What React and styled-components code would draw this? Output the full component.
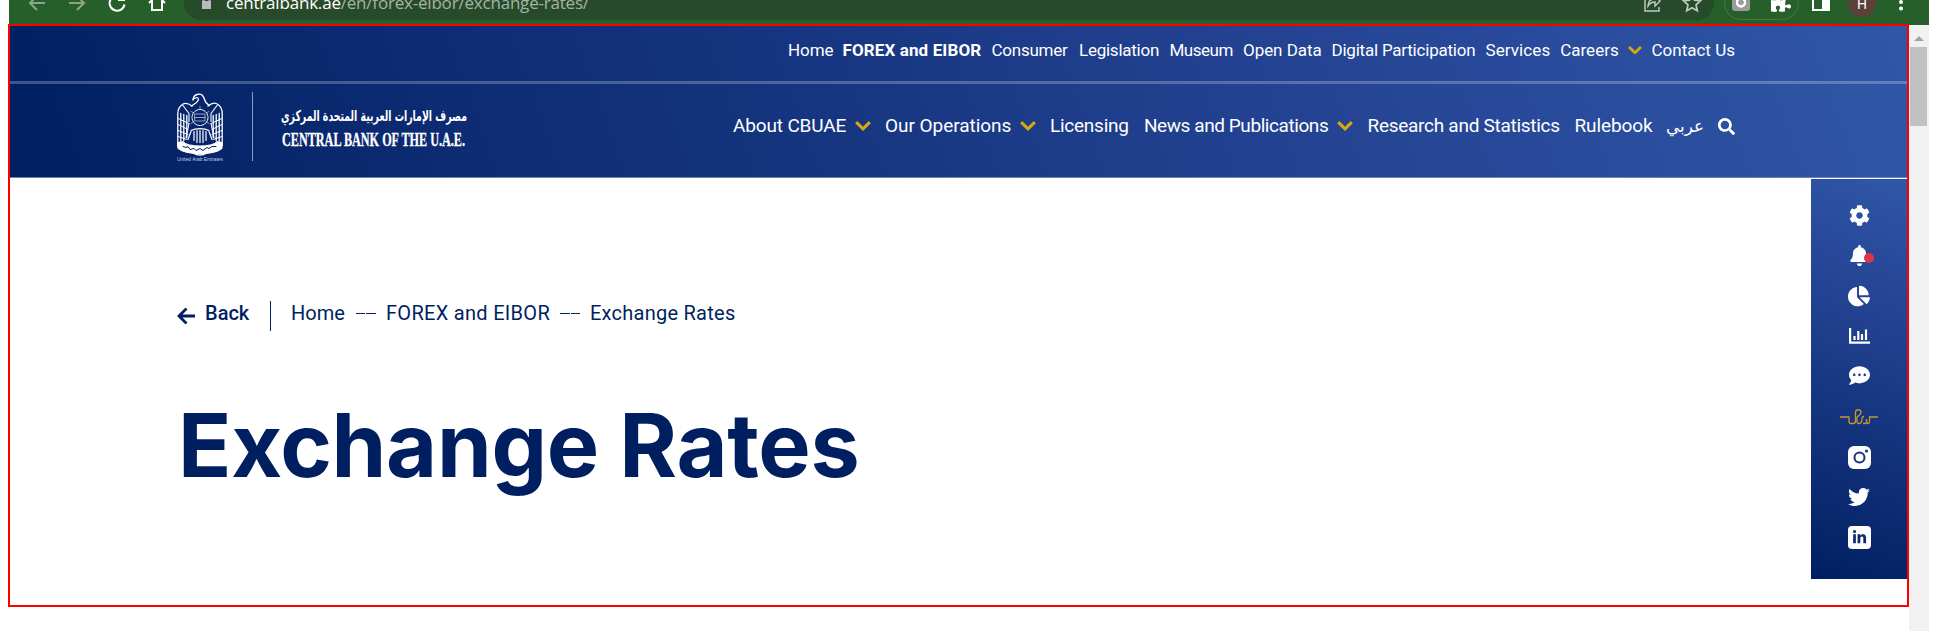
import React from 'react';
import styled, { createGlobalStyle } from 'styled-components';
import { FaCog, FaBell, FaChartPie, FaCommentDots, FaTwitter, FaLinkedinIn, FaSearch, FaPuzzlePiece } from 'react-icons/fa';

const navy = '#001f60';
const gold = '#d9a810';

const GlobalStyle = createGlobalStyle`
  * { box-sizing: border-box; }
  body { margin: 0; background: #fff; font-family: Roboto, "DejaVu Sans", sans-serif; }
`;

const Page = styled.div`
  width: 1938px;
  height: 631px;
  overflow: hidden;
  padding: 0 9px 0 8px;
`;

const BrowserBar = styled.div`
  height: 24px;
  margin-left: 1px;
  background: #275f2b;
  overflow: hidden;
`;

const BrowserRow = styled.div`
  display: flex;
  align-items: center;
  height: 46px;
  margin-top: -20px;
  padding: 0 17px 0 18px;
`;

const BrowserIcon = styled.svg`
  flex: none;
  width: ${(p) => p.$width || 20}px;
  height: 20px;
  margin-right: ${(p) => p.$gap || 0}px;
  opacity: ${(p) => p.$opacity || 1};
  fill: none;
  stroke: #fff;
  stroke-width: 2;
`;

const AddressBar = styled.div`
  display: flex;
  flex: none;
  align-items: center;
  width: 1530px;
  height: 34px;
  padding: 0 12px 0 17px;
  border-radius: 17px;
  background: #274a2a;
`;

const Url = styled.span`
  flex: 1;
  font: 17px/34px "Open Sans", sans-serif;
  letter-spacing: -0.2px;
  color: #a3b5a4;
  b { font-weight: 400; color: #fff; }
`;

const Extensions = styled.div`
  display: flex;
  flex: none;
  align-items: center;
  justify-content: space-between;
  width: 75px;
  height: 33px;
  margin: 0 12px 0 10px;
  padding: 0 7px;
  border: 1px solid #3d7a42;
  border-radius: 17px;
  color: #fff;
`;

const CameraBadge = styled.span`
  width: 18px;
  height: 18px;
  margin-top: -2px;
  border-radius: 3px;
  background: radial-gradient(circle at 50% 52%, #9c9c9c 2.5px, #fff 3px, #fff 5px, #9c9c9c 5.5px);
`;

const Avatar = styled.span`
  flex: none;
  width: 28px;
  height: 28px;
  margin: 0 16px 0 17px;
  border-radius: 50%;
  background: #5d4037;
  color: #fff;
  font-size: 14px;
  line-height: 30px;
  text-align: center;
`;

const Viewport = styled.div`
  display: flex;
  height: 607px;
`;

const Site = styled.div`
  width: 1901px;
  height: 583px;
  border: 2px solid #f00;
`;

const Header = styled.header`
  height: 152px;
  border-bottom: 1px solid #6b83b9;
  background: linear-gradient(70deg, #001f62 0%, #254494 70%, #3057a7 100%);
`;

const TopBar = styled.div`
  display: flex;
  justify-content: flex-end;
  height: 58px;
  padding: 12px 172px 0 0;
  border-bottom: 3px solid rgba(255, 255, 255, 0.24);
`;

const MainBar = styled.div`
  display: flex;
  justify-content: space-between;
  padding: 8px 172px 0 167px;
`;

const Nav = styled.nav`
  display: flex;
  color: #fff;
  font-size: ${(p) => p.$size}px;
  line-height: 24px;
  margin-top: ${(p) => p.$top || 0}px;
`;

const NavItem = styled.a`
  display: flex;
  align-items: center;
  flex: none;
  width: ${(p) => p.$width}px;
  height: 24px;
  white-space: nowrap;
  font-weight: ${(p) => (p.$active ? 700 : 400)};
  letter-spacing: ${(p) => p.$spacing || 0}px;
  svg { flex: none; }
`;

const ChevronSvg = styled.svg`
  margin: 0 ${(p) => p.$after}px 0 auto;
`;

const Chevron = ({ size, after }) => (
  <ChevronSvg $after={after} width={size} height={size * 0.62} viewBox="0 0 15 9.3">
    <path d="M1.1 1.1 7.5 7.3 13.900 1.1" fill="none" stroke={gold} strokeWidth="2.900" />
  </ChevronSvg>
);

const Content = styled.main`
  display: flex;
  justify-content: space-between;
  align-items: flex-start;
  padding-top: 1px;
`;

const Article = styled.div`
  padding: 122px 0 0 167px;
  color: ${navy};
`;

const Breadcrumb = styled.div`
  display: flex;
  align-items: center;
  height: 30px;
  font-size: 20px;
  white-space: nowrap;
`;

const BackLink = styled.a`
  display: flex;
  align-items: center;
  width: 94px;
  height: 30px;
  margin-right: 20px;
  border-right: 1px solid ${navy};
  font-weight: 500;
  padding-bottom: 6px;
  svg { margin: 5px 9px 0 0; }
`;

const Crumb = styled.a`
  width: ${(p) => p.$width}px;
  letter-spacing: ${(p) => p.$spacing || 0}px;
  padding-bottom: 6px;
`;

const Dash = styled.span`
  width: 20px;
  height: 1px;
  margin: 0 10px 6px 0;
  background: linear-gradient(90deg, ${navy} 9.5px, transparent 9.5px, transparent 10.5px, ${navy} 10.5px);
`;

const Title = styled.h1`
  margin: 62px 0 0 1px;
  font-family: Inter, Roboto, sans-serif;
  font-size: 88px;
  line-height: 104px;
  font-weight: 700;
  letter-spacing: -0.3px;
  white-space: nowrap;
`;

const ToolRail = styled.aside`
  display: flex;
  flex-direction: column;
  align-items: center;
  width: 96px;
  height: 400px;
  padding-top: 16px;
  background: linear-gradient(200deg, #3057a7 0%, #254494 30%, #001f62 100%);
  color: #fff;
`;

const Tool = styled.a`
  display: flex;
  align-items: center;
  justify-content: center;
  position: relative;
  width: 40px;
  height: 40.3px;
  padding: ${(p) => (p.$shift > 0 ? p.$shift : 0)}px 0 ${(p) => (p.$shift < 0 ? -p.$shift : 0)}px;
`;

const AlertDot = styled.span`
  position: absolute;
  left: 25px;
  top: 18px;
  width: 10px;
  height: 10px;
  border-radius: 50%;
  background: #dc3545;
`;

const SocialTile = styled.span`
  display: flex;
  align-items: center;
  justify-content: center;
  width: 23px;
  height: 23px;
  border-radius: ${(p) => p.$radius}px;
  background: #fff;
  color: #0d2a70;
`;

const ScrollTrack = styled.div`
  width: 20px;
  height: 607px;
  padding: 11px 2px 0 1px;
  background: #f1f1f1;
  border-top: 1px solid #275f2b;
`;

const ScrollArrow = styled.div`
  width: 0;
  margin: 0 auto 6px 4px;
  border: 5px solid transparent;
  border-top: 0;
  border-bottom-color: #a3a3a3;
`;

const ScrollThumb = styled.div`
  height: 79px;
  background: #c1c1c1;
`;

const topLinks = [
  { label: 'Home', width: 54.5, spacing: -0.1 },
  { label: 'FOREX and EIBOR', width: 149, active: true, spacing: 0.12 },
  { label: 'Consumer', width: 87.5, spacing: -0.25 },
  { label: 'Legislation', width: 90.5, spacing: -0.25 },
  { label: 'Museum', width: 73.5, spacing: -0.5 },
  { label: 'Open Data', width: 88.5, spacing: -0.05 },
  { label: 'Digital Participation', width: 154, spacing: -0.22 },
  { label: 'Services', width: 74.7, spacing: 0.08 },
  { label: 'Careers', width: 91.3, menu: true },
  { label: 'Contact Us', width: 83.5 },
];

const mainLinks = [
  { label: 'About CBUAE', width: 152, menu: true, spacing: -0.15 },
  { label: 'Our Operations', width: 165, menu: true, spacing: -0.05 },
  { label: 'Licensing', width: 94, spacing: -0.25 },
  { label: 'News and Publications', width: 223.500, menu: true, spacing: -0.43 },
  { label: 'Research and Statistics', width: 207, spacing: -0.28 },
  { label: 'Rulebook', width: 91.500, spacing: -0.1 },
];

const Emblem = () => (
  <g fill="none" stroke="#fff" strokeLinecap="round" strokeLinejoin="round">
    <path d="M16 6.500l1-3.500c2-2.500 6-3 8-1.500 2.500 2 2 4.500 4 7.500l3 3" strokeWidth="1.400" />
    <path d="M16 5.500l4-1.500c2.500.5 1.500 3-.5 5l-5 3.500" strokeWidth="1.200" />
    <path d="M15 12.500c-2-1.500-6-3.500-9-2C2 13 .8 17 .8 20v32M31 12.500c3-2.500 7-4 10-1.500 3.500 2.500 4.200 6 4.200 9v32" strokeWidth="1.300" />
    <path d="M3.800 20v29M6.800 21v26M9.800 22v22M42.200 20v29M39.200 21v26M36.200 22v22" strokeWidth="1.300" />
    <path d="M1 25l11 5M1 31l10 5M1 37l10 4M1 43l9 3M45 25l-11 5M45 31l-10 5M45 37l-10 4M45 43l-9 3" strokeWidth="1" />
    <path d="M6 12l6 8v8M40 12l-6 8v8M12 30l-3 14M34 30l3 14" strokeWidth="1.100" />
    <circle cx="23" cy="24" r="8" strokeWidth="1" strokeDasharray="3 1" />
    <path d="M18 20.500h10v7H18zM18 24h10M23 13v3M14 18l2 1M32 18l-2 1M14 30l2-1M32 30l-2-1" strokeWidth=".7" opacity=".8" />
    <path d="M14 37c5-2.500 13-2.500 18 0M17 38v9M20 37v12M23 37v12M26 37v12M29 38v9M14 38l-3 8M32 38l3 8" strokeWidth="1.200" />
    <path d="M1 49l5-1c4 6 30 6 34 0l5 1v6c-7 7-37 7-44 0z" fill="#fff" strokeWidth="1" />
    <path d="M6 53l3 1 2-1 2 3 4-1 2 2 4-2 3 2 4-3 2 1 3-2 4 0" stroke={navy} strokeWidth="1" />
    <path d="M17 60c3 2 9 2 12 0" strokeWidth="1.300" />
  </g>
);

const Logo = () => (
  <svg width="300" height="72" viewBox="0 0 300 72">
    <g transform="translate(0 1.500)"><Emblem /></g>
    <text x="0" y="69" fill="#c5cfe3" fontFamily="Liberation Sans, sans-serif" fontSize="5" textLength="46" lengthAdjust="spacingAndGlyphs">United Arab Emirates</text>
    <path d="M75.500 0v69" stroke="#8c9bc2" strokeWidth="1" />
    <text x="104" y="29" fill="#fff" fontFamily="DejaVu Sans, sans-serif" fontWeight="700" fontSize="15" textLength="186" lengthAdjust="spacingAndGlyphs">مصرف الإمارات العربية المتحدة المركزي</text>
    <text x="105" y="53.500" fill="#fff" stroke="#fff" strokeWidth=".3" fontFamily="Liberation Serif, serif" fontWeight="700" fontSize="18" textLength="183" lengthAdjust="spacingAndGlyphs">CENTRAL BANK OF THE U.A.E.</text>
  </svg>
);

export default function App() {
  return (
    <Page>
      <GlobalStyle />
      <BrowserBar>
        <BrowserRow>
          <BrowserIcon $opacity={0.45} $gap={20} viewBox="0 0 20 20"><path d="M18 10H3M10 3l-7 7 7 7" /></BrowserIcon>
          <BrowserIcon $opacity={0.45} $gap={20} viewBox="0 0 20 20"><path d="M2 10h15M10 3l7 7-7 7" /></BrowserIcon>
          <BrowserIcon $gap={20} viewBox="0 0 20 20"><path d="M16 5.500a7.500 7.500 0 1 0 1.500 6M17 1v6h-6" /></BrowserIcon>
          <BrowserIcon $gap={17} viewBox="0 0 20 20"><path d="M2 10l8-8 8 8M5 8v9h10V8" /></BrowserIcon>
          <AddressBar>
            <BrowserIcon $gap={14} $width={11} viewBox="0 0 11 20">
              <path d="M2.500 9V5.500a3 3 0 0 1 6 0V9" stroke="#b9b9c0" />
              <path d="M1 8h9v8H1z" fill="#b9b9c0" stroke="none" />
            </BrowserIcon>
            <Url><b>centralbank.ae</b>/en/forex-eibor/exchange-rates/</Url>
            <BrowserIcon $gap={20} $opacity={0.7} viewBox="0 0 20 20">
              <path d="M7 4H3v14h14v-4M6 13c0-5 3-7 7-7V2l5 6-5 5v-4c-3 0-5 1-7 4z" strokeWidth="1.500" />
            </BrowserIcon>
            <BrowserIcon $opacity={0.7} viewBox="0 0 20 20">
              <path d="M10 1.500l2.500 5.700 6 .6-4.500 4 1.300 6-5.300-3-5.300 3 1.300-6-4.500-4 6-.6z" strokeWidth="1.700" />
            </BrowserIcon>
          </AddressBar>
          <Extensions><CameraBadge /><FaPuzzlePiece size={20} /></Extensions>
          <BrowserIcon viewBox="0 0 20 20"><path d="M2 2h16v15H2z" strokeWidth="2" /><path d="M11 2h7v15h-7z" fill="#fff" stroke="none" /></BrowserIcon>
          <Avatar>H</Avatar>
          <BrowserIcon viewBox="0 0 20 20"><path d="M9 3h.01M9 9h.01M9 15.500h.01" strokeWidth="4" strokeLinecap="round" /></BrowserIcon>
        </BrowserRow>
      </BrowserBar>
      <Viewport>
        <Site>
          <Header>
            <TopBar>
              <Nav $size={17}>
                {topLinks.map((l) => (
                  <NavItem key={l.label} $width={l.width} $active={l.active} $spacing={l.spacing}>
                    {l.label}
                    {l.menu && <Chevron size={14} after={9.5} />}
                  </NavItem>
                ))}
              </Nav>
            </TopBar>
            <MainBar>
              <Logo />
              <Nav $size={19} $top={22}>
                {mainLinks.map((l) => (
                  <NavItem key={l.label} $width={l.width} $spacing={l.spacing}>
                    {l.label}
                    {l.menu && <Chevron size={16} after={14.5} />}
                  </NavItem>
                ))}
                <NavItem $width={52}>
                  <svg width="40" height="24" viewBox="0 0 40 24">
                    <text x="0" y="18" fill="#fff" fontFamily="DejaVu Sans, sans-serif" fontSize="17" textLength="38" lengthAdjust="spacingAndGlyphs">عربي</text>
                  </svg>
                </NavItem>
                <NavItem $width={17}><FaSearch size={17} /></NavItem>
              </Nav>
            </MainBar>
          </Header>
          <Content>
            <Article>
              <Breadcrumb>
                <BackLink>
                  <svg width="19" height="18" viewBox="0 0 19 18"><path d="M18 9H3M9.500 1.500L2 9l7.500 7.500" fill="none" stroke={navy} strokeWidth="2.800" /></svg>
                  Back
                </BackLink>
                <Crumb $width={65}>Home</Crumb>
                <Dash />
                <Crumb $width={174} $spacing={0.3}>FOREX and EIBOR</Crumb>
                <Dash />
                <Crumb $spacing={0.25}>Exchange Rates</Crumb>
              </Breadcrumb>
              <Title>Exchange Rates</Title>
            </Article>
            <ToolRail>
              <Tool><FaCog size={21} /></Tool>
              <Tool><FaBell size={21} /><AlertDot /></Tool>
              <Tool><FaChartPie size={22} /></Tool>
              <Tool $shift={-1}>
                <svg width="21" height="16" viewBox="0 0 21 16" fill="none" stroke="#fff" strokeWidth="2.200">
                  <path d="M1.100 0v14.700H21M5.500 12V8M9.300 12V3M13 12V6M17 12V1.500" />
                </svg>
              </Tool>
              <Tool $shift={-2}><FaCommentDots size={21} /></Tool>
              <Tool>
                <svg width="38" height="18" viewBox="0 0 38 18" fill="none" stroke="#c8962e" strokeWidth="1.300">
                  <path d="M0 9h9v4q0 2.500 2 2.500h2.500q2 0 2-2.500V9M15.500 13V5q0-3 1.500-3h2q2 0 2 2t-2 3.500l-2 1.500v4q0 2.500 2 2.500 3 0 3-5 0-2 2-2M23 15.500h2q1.500 0 1.500-2V11M26.500 13q0 2.500 1.500 2.500t1.500-2.500V9H38" />
                </svg>
              </Tool>
              <Tool $shift={1}>
                <SocialTile $radius={6}>
                  <svg width="23" height="23" viewBox="0 0 23 23"><circle cx="11.500" cy="11.500" r="5" fill="none" stroke="#15347b" strokeWidth="2" /><circle cx="18.500" cy="5" r="1.600" fill="#15347b" /></svg>
                </SocialTile>
              </Tool>
              <Tool><FaTwitter size={22} /></Tool>
              <Tool><SocialTile $radius={4}><FaLinkedinIn size={15} /></SocialTile></Tool>
            </ToolRail>
          </Content>
        </Site>
        <ScrollTrack>
          <ScrollArrow />
          <ScrollThumb />
        </ScrollTrack>
      </Viewport>
    </Page>
  );
}
